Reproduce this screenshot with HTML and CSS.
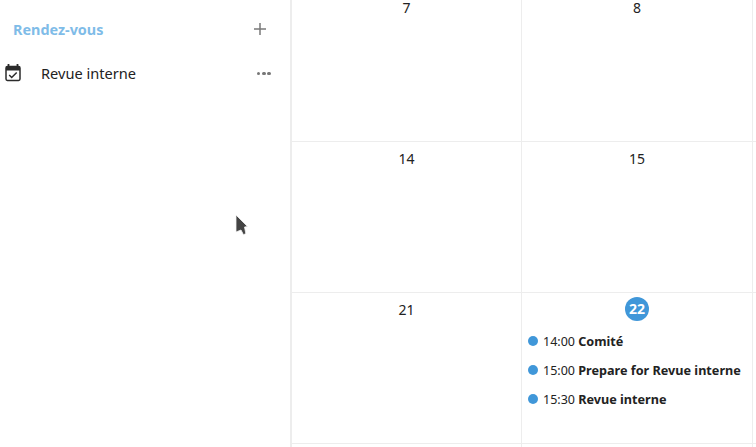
FILE: index.html
```html
<!DOCTYPE html>
<html lang="fr">
<head>
<meta charset="utf-8">
<title>Rendez-vous</title>
<link rel="stylesheet" href="styles.css">
</head>
<body>
<div class="app">
  <aside class="sidebar">
    <div class="side-head">
      <span class="side-title">Rendez-vous</span>
      <svg class="plus" width="14" height="14" viewBox="0 0 14 14"><path d="M7 1v12M1 7h12" stroke="#7a7a7a" stroke-width="1.5" fill="none"/></svg>
    </div>
    <div class="side-item">
      <svg class="cal" width="18" height="18" viewBox="0 0 18 18">
        <path d="M4.500 0v3M13.500 0v3" stroke="#2b2b2b" stroke-width="1.800" fill="none"/>
        <rect x="2" y="2.500" width="14" height="14" rx="1.400" fill="none" stroke="#2b2b2b" stroke-width="1.500"/>
        <path d="M2 3h14v3.500H2z" fill="#2b2b2b"/>
        <path d="M5.200 11l2.500 2.500 5-5" stroke="#2b2b2b" stroke-width="1.500" fill="none"/>
      </svg>
      <span class="item-label">Revue interne</span>
      <span class="dots"><i></i><i></i><i></i></span>
    </div>
    <svg class="cursor" width="16" height="24" viewBox="0 0 16 24">
      <path d="M1 1L12.500 12.500 9.500 13 10.800 19.500 8.500 20.800 6 16 1 18z" fill="#444" stroke="#f4f4f4" stroke-width="0.800"/>
    </svg>
  </aside>
  <main class="calendar">
    <div class="cell top"><span class="num">7</span></div>
    <div class="cell top"><span class="num">8</span></div>
    <div class="cell edge"></div>
    <div class="cell"><span class="num">14</span></div>
    <div class="cell"><span class="num">15</span></div>
    <div class="cell edge"></div>
    <div class="cell"><span class="num">21</span></div>
    <div class="cell">
      <span class="today">22</span>
      <div class="events">
        <div class="event"><i class="dot"></i><span>14:00 <b>Comité</b></span></div>
        <div class="event"><i class="dot"></i><span>15:00 <b>Prepare for Revue interne</b></span></div>
        <div class="event"><i class="dot"></i><span>15:30 <b>Revue interne</b></span></div>
      </div>
    </div>
    <div class="cell edge"></div>
    <div class="cell short"></div>
    <div class="cell short"></div>
  </main>
</div>
</body>
</html>
```

FILE: styles.css
```css
* { box-sizing: border-box; }
html, body { margin: 0; height: 100%; background: #fff; overflow: hidden; }
body { font-family: "Noto Sans", "Open Sans", sans-serif; color: #222; }
.app { display: flex; width: 756px; height: 447px; }
.sidebar { position: relative; width: 292px; flex: none; border-right: 2px solid #ededed; }
.side-head { display: flex; align-items: center; justify-content: space-between; height: 20px; margin-top: 19px; padding: 0 23px 0 13px; }
.side-title { font-size: 14.400px; font-weight: 700; color: #7fbce8; }
.side-item { display: flex; align-items: center; height: 24px; margin-top: 22px; padding: 0 19px 0 4px; }
.cal { flex: none; }
.item-label { font-size: 14.600px; margin-left: 19px; flex: 1; color: #222; }
.dots { display: flex; gap: 1.700px; margin-top: 1px; }
.dots i { width: 3.600px; height: 3.600px; border-radius: 50%; background: #777; }
.cursor { position: absolute; left: 235px; top: 214px; }
.calendar { flex: none; width: 464px; display: grid; grid-template-columns: 230px 231px 3px; grid-template-rows: 142px 151px 151px 3px; align-content: start; }
.cell { display: flex; flex-direction: column; align-items: center; border-right: 1px solid #ededed; border-bottom: 1px solid #ededed; padding-top: 7px; min-height: 0; }
.cell.top { padding-top: 0; }
.cell.edge { padding: 0; border-right: 0; }
.cell.short { padding: 0; border-bottom: 0; }
.num { font-size: 14px; line-height: 20px; }
.top .num { line-height: 16px; }
.today { width: 24px; height: 24px; margin-top: -3px; border-radius: 50%; background: #4097d9; color: #fff; font-weight: 700; font-size: 14px; line-height: 24px; text-align: center; }
.events { align-self: stretch; display: flex; flex-direction: column; gap: 9px; padding: 10px 0 0 6px; font-size: 12.500px; }
.event { display: flex; align-items: center; height: 20px; gap: 5px; white-space: nowrap; color: #222; }
.event b { font-size: 12.650px; }
.dot { width: 10px; height: 10px; border-radius: 50%; background: #4097d9; flex: none; }
```
